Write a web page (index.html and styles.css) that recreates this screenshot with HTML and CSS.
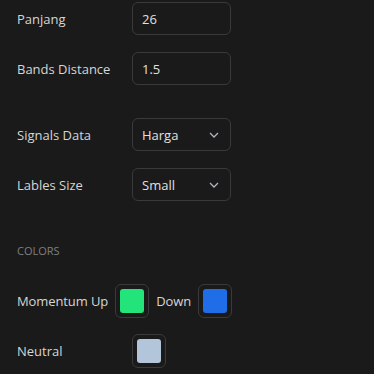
FILE: index.html
```html
<!DOCTYPE html>
<html lang="id">
<head>
    <meta charset="UTF-8">
    <title>Settings</title>
    <link rel="stylesheet" href="styles.css">
</head>
<body>

<div class="panel">
    <div class="row">
        <span class="label">Panjang</span>
        <div class="field">26</div>
    </div>
    <div class="row">
        <span class="label">Bands Distance</span>
        <div class="field">1.5</div>
    </div>

    <div class="row group-start">
        <span class="label">Signals Data</span>
        <div class="field select">Harga
            <svg class="chev" width="10" height="6" viewBox="0 0 10 6"><path d="M1 1l4 4 4-4" fill="none" stroke="#b2b5be" stroke-width="1.3"/></svg>
        </div>
    </div>
    <div class="row">
        <span class="label">Lables Size</span>
        <div class="field select">Small
            <svg class="chev" width="10" height="6" viewBox="0 0 10 6"><path d="M1 1l4 4 4-4" fill="none" stroke="#b2b5be" stroke-width="1.3"/></svg>
        </div>
    </div>

    <div class="section-title">COLORS</div>

    <div class="row inline">
        <span class="label-inline">Momentum Up</span>
        <div class="swatch"><span class="chip green"></span></div>
        <span class="label-inline">Down</span>
        <div class="swatch"><span class="chip blue"></span></div>
    </div>
    <div class="row">
        <span class="label">Neutral</span>
        <div class="swatch"><span class="chip gray"></span></div>
    </div>
</div>

</body>
</html>
```

FILE: styles.css
```css
html, body { margin: 0; background: #1a1a1a; }
body { font-family: "Open Sans", "DejaVu Sans", sans-serif; font-size: 13px; color: #d6d6d6; }
.panel { padding: 2px 0 0 17px; }
.row { display: flex; align-items: center; height: 33px; margin-bottom: 17px; }
.row.group-start { margin-top: 33px; }
.label { width: 115px; flex: none; }
.field { box-sizing: border-box; width: 99px; height: 33px; border: 1px solid #3a3a3a; border-radius: 6px; padding: 0 9px; display: flex; align-items: center; color: #e0e0e0; }
.select { justify-content: space-between; }
.chev { margin-right: 2px; }
.section-title { font-size: 11px; color: #7f7f7f; margin-top: 42px; height: 41px; line-height: 16px; }
.row.inline { gap: 7px; height: 34px; margin-bottom: 16px; }
.label-inline { letter-spacing: -0.1px; }
.swatch { box-sizing: border-box; width: 34px; height: 34px; border: 1px solid #3a3a3a; border-radius: 6px; padding: 4px; display: flex; }
.chip { flex: 1; border-radius: 3px; }
.green { background: #22e47a; }
.blue { background: #1f6ee8; }
.gray { background: #b2c5da; }
```
